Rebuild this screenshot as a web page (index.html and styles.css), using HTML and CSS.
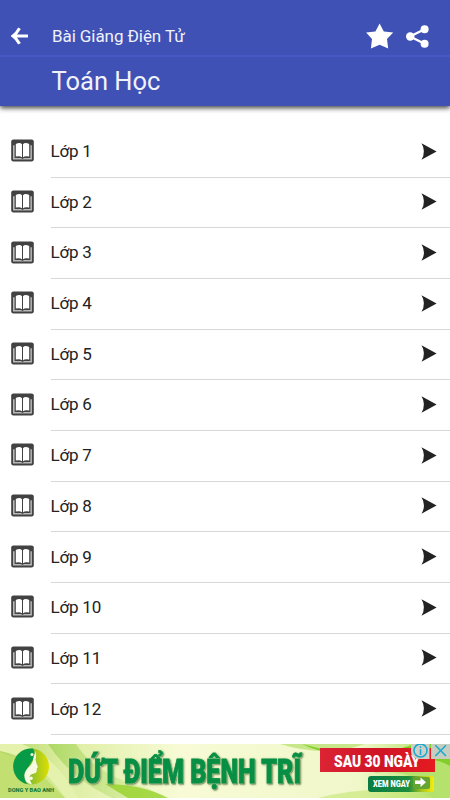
FILE: index.html
```html
<!DOCTYPE html>
<html lang="vi">
<head>
<meta charset="utf-8">
<title>Bài Giảng Điện Tử</title>
<link rel="stylesheet" href="styles.css">
</head>
<body>
<svg class="defs" width="0" height="0" aria-hidden="true">
  <symbol id="book" viewBox="0 0 24 24">
    <rect x="0.2" y="0.4" width="22.6" height="22" rx="2.2" fill="#424242"/>
    <path d="M2 6.2H3.6V19H10l1.5 1 1.5-1h6.4V6.2h1.5v14.3H2z" fill="#b9b9b9"/>
    <path d="M4.8 4.9Q9 3.2 11 5.2V18.2Q9 16.8 4.8 17.6zM12 5.2Q14 3.2 18.2 4.9V17.6Q14 16.8 12 18.2z" fill="#fff"/>
  </symbol>
  <symbol id="arrow" viewBox="0 0 16 17">
    <path d="M.5.2 15.6 8.4.5 16.7Q5.4 8.4.5.2z" fill="#222"/>
  </symbol>
</svg>
<header class="header">
  <div class="toolbar">
    <svg class="back" viewBox="0 0 18 18" width="18" height="18"><path d="M17 9H2.5M8.5 1.2Q5.6 6.5 2 9Q5.6 11.5 8.5 16.8" fill="none" stroke="#fff" stroke-width="3"/></svg>
    <span class="app-name">Bài Giảng Điện Tử</span>
    <svg class="star" viewBox="0 0 28 27" width="28" height="27"><path d="M13.6.5 17.8 8.4 27.2 9.4 21 15.9 22.2 25.6 13.6 21.8 4.9 25.6 6 15.9.1 9.4 9.4 8.4z" fill="#fff"/></svg>
    <svg class="share" viewBox="0 0 24 24" width="24" height="24"><path d="M18.6 5.2 4 12.5 18.6 19.8" fill="none" stroke="#fff" stroke-width="2.3"/><g fill="#fff"><circle cx="18.6" cy="5.2" r="4"/><circle cx="4.2" cy="12.5" r="4.2"/><circle cx="18.6" cy="19.8" r="4"/></g></svg>
  </div>
  <h1 class="title">Toán Học</h1>
</header>
<ul class="list">
  <li class="row"><svg class="book"><use href="#book"/></svg><div class="cell"><span>Lớp 1</span><svg class="arrow"><use href="#arrow"/></svg></div></li>
  <li class="row"><svg class="book"><use href="#book"/></svg><div class="cell"><span>Lớp 2</span><svg class="arrow"><use href="#arrow"/></svg></div></li>
  <li class="row"><svg class="book"><use href="#book"/></svg><div class="cell"><span>Lớp 3</span><svg class="arrow"><use href="#arrow"/></svg></div></li>
  <li class="row"><svg class="book"><use href="#book"/></svg><div class="cell"><span>Lớp 4</span><svg class="arrow"><use href="#arrow"/></svg></div></li>
  <li class="row"><svg class="book"><use href="#book"/></svg><div class="cell"><span>Lớp 5</span><svg class="arrow"><use href="#arrow"/></svg></div></li>
  <li class="row"><svg class="book"><use href="#book"/></svg><div class="cell"><span>Lớp 6</span><svg class="arrow"><use href="#arrow"/></svg></div></li>
  <li class="row"><svg class="book"><use href="#book"/></svg><div class="cell"><span>Lớp 7</span><svg class="arrow"><use href="#arrow"/></svg></div></li>
  <li class="row"><svg class="book"><use href="#book"/></svg><div class="cell"><span>Lớp 8</span><svg class="arrow"><use href="#arrow"/></svg></div></li>
  <li class="row"><svg class="book"><use href="#book"/></svg><div class="cell"><span>Lớp 9</span><svg class="arrow"><use href="#arrow"/></svg></div></li>
  <li class="row"><svg class="book"><use href="#book"/></svg><div class="cell"><span>Lớp 10</span><svg class="arrow"><use href="#arrow"/></svg></div></li>
  <li class="row"><svg class="book"><use href="#book"/></svg><div class="cell"><span>Lớp 11</span><svg class="arrow"><use href="#arrow"/></svg></div></li>
  <li class="row"><svg class="book"><use href="#book"/></svg><div class="cell"><span>Lớp 12</span><svg class="arrow"><use href="#arrow"/></svg></div></li>
</ul>
<svg class="banner" viewBox="0 0 450 54" width="450" height="54">
  <defs>
    <linearGradient id="bg"><stop offset="0" stop-color="#b4d765"/><stop offset=".14" stop-color="#dceda0"/><stop offset=".4" stop-color="#f8fbd6"/><stop offset=".8" stop-color="#f0f7c9"/><stop offset="1" stop-color="#a5dc55"/></linearGradient>
    <linearGradient id="leaf"><stop offset="0" stop-color="#6ebd16"/><stop offset="1" stop-color="#d8ee9a"/></linearGradient>
    <linearGradient id="red"><stop offset="0" stop-color="#dc2434"/><stop offset=".5" stop-color="#cf1426"/><stop offset="1" stop-color="#e51b20"/></linearGradient>
    <linearGradient id="cta"><stop offset="0" stop-color="#087c43"/><stop offset=".62" stop-color="#1d8c3d"/><stop offset=".82" stop-color="#acc71b"/><stop offset="1" stop-color="#f8ed0c"/></linearGradient>
    <linearGradient id="disc"><stop offset=".4" stop-color="#7fb93a"/><stop offset="1" stop-color="#dddf00"/></linearGradient>
  </defs>
  <rect width="450" height="54" fill="url(#bg)"/>
  <path d="M0 8Q35 20 65 54H0z" fill="#c2e071"/>
  <path d="M0 0H22Q58 14 78 54H66Q38 14 0 7z" fill="#e5f2ae"/>
  <path d="M48 0H76Q96 32 150 45L164 54H112Q70 34 48 0z" fill="url(#leaf)" opacity=".38"/>
  <path d="M105 40Q142 40 168 54H128z" fill="#8bce18" opacity=".7"/>
  <path d="M280 0Q325 14 365 0z" fill="#c8e78a"/>
  <path d="M302 0Q365 18 415 0H450V54H440Q424 14 380 10Q330 14 302 0z" fill="#82ce28"/>
  <path d="M374 29Q416 23 437 54H450V22Q428 9 390 20z" fill="#b5e26c"/>
  <path d="M318 54Q380 38 434 54z" fill="#c4e675" opacity=".6"/>
  <circle cx="31" cy="22.5" r="18" fill="url(#disc)"/>
  <path d="M33 4.6A18 18 0 0 0 27 40Q23 34 25 28L34 14Q36 9 33 4.6z" fill="#079b48"/>
  <path d="M35 7Q37 11 35.5 15Q36 19 38 23L36.7 24.5Q37.5 29 34 29.5Q30 30 29.5 33Q30 38 32 40.5Q24 39 24.5 31Q25 26 30 22Q33.5 18 33.5 13Q35 10 35 7z" fill="#f6fae2"/>
  <circle cx="32" cy="10.5" r="1.6" fill="#e8f4cf"/><circle cx="31" cy="34.2" r="1.8" fill="#f6fae2"/>
  <text class="brand" x="8" y="48" textLength="46" lengthAdjust="spacingAndGlyphs">DONG Y BAO ANH</text>
  <g class="headline-wrap"><text class="headline" transform="translate(68 38.5) scale(1 1.42)" textLength="233" lengthAdjust="spacingAndGlyphs">DỨT ĐIỂM BỆNH TRĨ</text></g>
  <rect x="320" y="4" width="115" height="24" fill="url(#red)"/>
  <text class="offer" transform="translate(334 23) scale(1 1.25)" textLength="86" lengthAdjust="spacingAndGlyphs">SAU 30 NGÀY</text>
  <rect x="368" y="32" width="66" height="16" rx="3" fill="url(#cta)"/>
  <rect x="413" y="33" width="17" height="12" rx="2" fill="#65a532"/>
  <text class="cta" transform="translate(373 42.5) scale(1 1.3)" textLength="37" lengthAdjust="spacingAndGlyphs">XEM NGAY</text>
  <path d="M415 36.5H420.5V33.5L426 38.2 420.5 43V40H415z" fill="#fff"/>
  <path d="M411 0H429.5V15H417Q411 13 411 7z" fill="#cdcfc8"/>
  <rect x="431" width="19" height="15" fill="#c6cec1"/>
  <g fill="none" stroke="#18a9ce" stroke-width="1.5"><circle cx="420.5" cy="6.5" r="6.5"/><path d="M435.3 1.3 446 12M446 1.3 435.3 12M420.5 5.3V11M420.5 2.2V4"/></g>
</svg>
</body>
</html>
```
FILE: styles.css
```css
* { box-sizing: border-box; }
body {
  margin: 0;
  width: 450px;
  height: 800px;
  overflow: hidden;
  background: #fff;
  font-family: Roboto, sans-serif;
  color: #222;
}
svg { display: block; flex: none; }
.defs { position: absolute; }
.header {
  height: 106px;
  background: #3f51b5;
  color: #fff;
  box-shadow: 0 2px 5px rgba(0, 0, 0, .75);
}
.toolbar {
  display: flex;
  align-items: center;
  height: 57px;
  padding: 17px 20px 0 11px;
  border-bottom: 2px solid #4558c3;
}
.back { margin-right: 23px; }
.app-name { flex: 1; font-size: 17px; letter-spacing: -.08px; color: #f1f2fa; }
.star { margin-right: 12px; }
.title {
  margin: 0;
  padding-left: 51.5px;
  font-size: 25.5px;
  font-weight: 400;
  line-height: 48px;
  color: #f1f2fa;
}
.list {
  margin: 0;
  padding: 20.9px 0 0;
  height: 638px;
  list-style: none;
}
.row {
  display: flex;
  align-items: center;
  height: 50.68px;
  padding-left: 11px;
}
.book { width: 24px; height: 24px; margin: 0 15.5px 2px 0; }
.cell {
  flex: 1;
  display: flex;
  align-items: center;
  justify-content: space-between;
  height: 100%;
  padding: 0 13.5px 1.2px 0;
  border-bottom: 1px solid #d8d8d8;
  font-size: 17px;
  letter-spacing: -.2px;
}
.arrow { width: 16px; height: 17px; }
.headline-wrap {
  filter: drop-shadow(0 0 1px #d9edb0) drop-shadow(1px 1px .3px #718858);
}
.headline {
  font: 900 24px Roboto, sans-serif;
  fill: #078f45;
  stroke: #078f45;
  stroke-width: .6px;
}
.brand { font: 900 5.5px Roboto, sans-serif; fill: #137b3c; }
.offer { font: 900 13.5px Roboto, sans-serif; fill: #fff; }
.cta { font: 900 7px Roboto, sans-serif; fill: #fff; }
```
